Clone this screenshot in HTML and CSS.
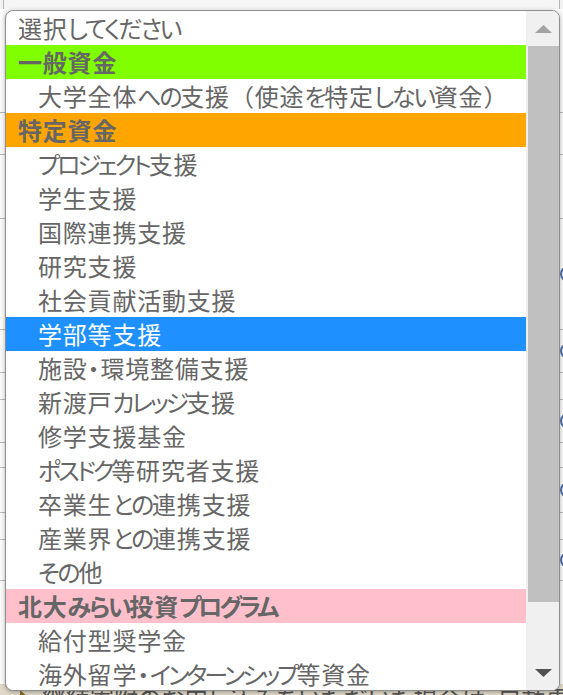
FILE: index.html
```html
<!DOCTYPE html>
<html lang="ja">
<head>
<meta charset="utf-8">
<title>選択してください</title>
<link rel="stylesheet" href="styles.css">
</head>
<body>
<div class="page">
  <div class="select-box"></div>
  <div class="bg-rows">
    <div class="row h104"></div>
    <div class="row h42"></div>
    <div class="row h64"></div>
    <div class="row h111 radio-row"><span class="radio"></span></div>
    <div class="row h43 radio-row"><span class="radio"></span></div>
    <div class="row h27"></div>
    <div class="row h43 radio-row"><span class="radio"></span></div>
    <div class="row h25"></div>
    <div class="row h45 radio-row"><span class="radio"></span></div>
    <div class="row h27"></div>
    <div class="row h41 radio-row"><span class="radio"></span></div>
    <div class="row h103"></div>
  </div>
  <div class="note"><span class="tri"></span>継続寄附のお申し込みをいただいた場合は、自動更新</div>

  <div class="popup">
    <ul class="list">
      <li class="opt top">選択<span class="hk">してください</span></li>
      <li class="grp green">一般資金</li>
      <li class="opt">大学全体<span class="hk">への</span>支援<span class="fp">（</span>使途<span class="hk">を</span>特定<span class="hk">しない</span>資金<span class="fp">）</span></li>
      <li class="grp orange">特定資金</li>
      <li class="opt"><span class="kk">プロジェクト</span>支援</li>
      <li class="opt">学生支援</li>
      <li class="opt">国際連携支援</li>
      <li class="opt">研究支援</li>
      <li class="opt">社会貢献活動支援</li>
      <li class="opt selected">学部等支援</li>
      <li class="opt">施設・環境整備支援</li>
      <li class="opt">新渡戸<span class="kk">カレッジ</span>支援</li>
      <li class="opt">修学支援基金</li>
      <li class="opt"><span class="kk">ポスドク</span>等研究者支援</li>
      <li class="opt">卒業生<span class="hk">との</span>連携支援</li>
      <li class="opt">産業界<span class="hk">との</span>連携支援</li>
      <li class="opt"><span class="hk">その</span>他</li>
      <li class="grp pink">北大<span class="hk">みらい</span>投資<span class="kk">プログラム</span></li>
      <li class="opt">給付型奨学金</li>
      <li class="opt">海外留学・<span class="kk">インターンシップ</span>等資金</li>
    </ul>
    <div class="scrollbar">
      <div class="sb-btn"><svg width="17" height="8" viewBox="0 0 17 8"><polygon points="8.5,0 17,8 0,8" fill="#a3a3a3"/></svg></div>
      <div class="sb-thumb"></div>
      <div class="sb-space"></div>
      <div class="sb-btn"><svg width="17" height="8" viewBox="0 0 17 8"><polygon points="0,0 17,0 8.5,8" fill="#505050"/></svg></div>
    </div>
  </div>
</div>
</body>
</html>
```
FILE: styles.css
```css
* { box-sizing: border-box; }
html, body { margin: 0; padding: 0; }
body {
  background: #f2f2f2;
  font-family: "Noto Sans CJK JP", "Noto Sans", sans-serif;
  font-feature-settings: "palt" 1;
}
.page {
  position: relative;
  width: 563px;
  height: 695px;
  overflow: hidden;
}
.select-box {
  height: 9px;
  margin: 0 3px;
  background: #f5f5f5;
  border-left: 1px solid #b5b5b5;
  border-right: 1px solid #b5b5b5;
}
.bg-rows { background: #fbfbfb; }
.row { border-bottom: 1px solid #b9b9b9; display: flex; align-items: center; }
.h104 { height: 104px; }
.h42 { height: 42px; }
.h64 { height: 64px; }
.h111 { height: 111px; }
.h43 { height: 43px; }
.h27 { height: 27px; }
.h25 { height: 25px; }
.h45 { height: 45px; }
.h41 { height: 41px; }
.h103 { height: 103px; border-bottom: none; }
.radio {
  width: 16px;
  height: 16px;
  margin-left: 560px;
  border-radius: 50%;
  border: 2px solid #5470a8;
  background: #e8eef8;
  flex: none;
}
.note {
  height: 40px;
  background: #e0d9c9;
  padding: 2px 0 0 42px;
  font-size: 24px;
  line-height: 24px;
  color: #555;
  white-space: nowrap;
  display: flex;
  align-items: flex-start;
}
.tri {
  width: 0;
  height: 0;
  border-top: 8px solid transparent;
  border-bottom: 8px solid transparent;
  border-left: 9px solid #8a6a22;
  margin: 4px 13px 0 -22px;
}

.popup {
  position: absolute;
  top: 10px;
  left: 5px;
  width: 555px;
  height: 681px;
  border: 1px solid #8e8e8e;
  border-radius: 8px;
  overflow: hidden;
  background: #fff;
  display: flex;
  box-shadow: 0 1px 4px rgba(0, 0, 0, 0.3);
}
.list {
  list-style: none;
  margin: 0;
  padding: 0;
  width: 520px;
  flex: none;
}
.list li {
  height: 34px;
  line-height: 34px;
  font-size: 24px;
  letter-spacing: 0.8px;
  color: #666;
  white-space: nowrap;
  overflow: hidden;
}
.hk { letter-spacing: -2.2px; }
.kk { letter-spacing: -3px; }
.fp { font-feature-settings: normal; }
.opt { padding-left: 32px; }
.opt.top { padding-left: 12px; }
.grp { padding-left: 12px; font-weight: 700; }
.green { background: #7fff00; }
.orange { background: #ffa500; }
.pink { background: #ffc0cb; }
.list li.selected { background: #1e90ff; color: #fff; }

.scrollbar {
  width: 33px;
  flex: none;
  background: #f0f0f0;
  display: flex;
  flex-direction: column;
}
.sb-btn {
  height: 35px;
  flex: none;
  display: flex;
  align-items: center;
  justify-content: center;
  padding-left: 1px;
}
.sb-btn svg { display: block; }
.sb-thumb {
  height: 556px;
  flex: none;
  margin-left: 2px;
  background: #c0c0c0;
}
.sb-space { flex: 1; }
```
